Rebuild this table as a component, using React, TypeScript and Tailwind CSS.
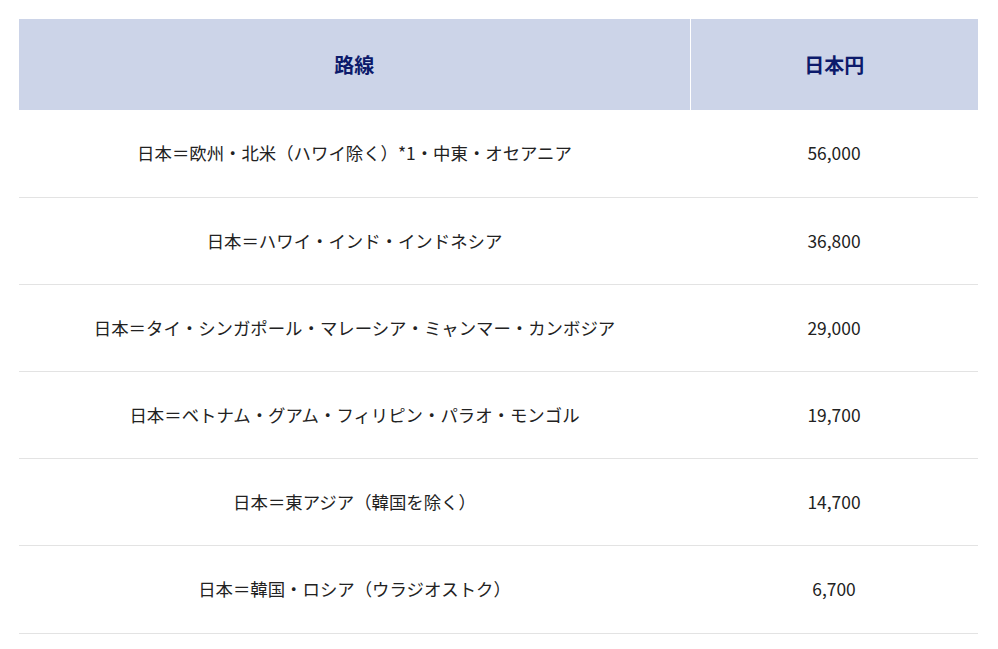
const rows = [
  { route: "日本＝欧州・北米（ハワイ除く）*1・中東・オセアニア", yen: "56,000" },
  { route: "日本＝ハワイ・インド・インドネシア", yen: "36,800" },
  { route: "日本＝タイ・シンガポール・マレーシア・ミャンマー・カンボジア", yen: "29,000" },
  { route: "日本＝ベトナム・グアム・フィリピン・パラオ・モンゴル", yen: "19,700" },
  { route: "日本＝東アジア（韓国を除く）", yen: "14,700" },
  { route: "日本＝韓国・ロシア（ウラジオストク）", yen: "6,700" },
];

export default function App() {
  return (
    <div className="min-h-screen bg-white pt-[19px] pl-[19px] font-['Noto_Sans_CJK_JP',sans-serif] text-[17.4px] text-[#222]">
      <table className="w-[959px] border-collapse table-fixed">
        <thead>
          <tr className="h-[91px] bg-[#ccd4e8] text-[#0c1a6b] font-bold text-[20px]">
            <th className="w-[671px] border-r border-white text-center">路線</th>
            <th className="text-center">日本円</th>
          </tr>
        </thead>
        <tbody>
          {rows.map((row) => (
            <tr key={row.yen} className="h-[87.2px] border-b border-[#e3e3e3]">
              <td className="text-center">{row.route}</td>
              <td className="text-center">{row.yen}</td>
            </tr>
          ))}
        </tbody>
      </table>
    </div>
  );
}
